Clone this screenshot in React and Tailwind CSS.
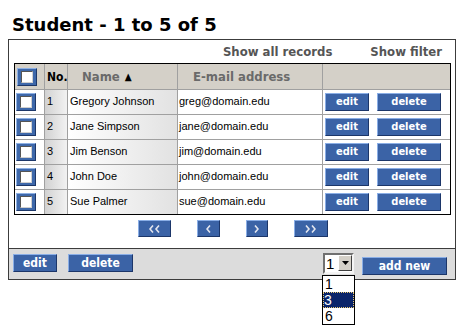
import React from "react";

const students = [
  { no: 1, name: "Gregory Johnson", email: "greg@domain.edu" },
  { no: 2, name: "Jane Simpson", email: "jane@domain.edu" },
  { no: 3, name: "Jim Benson", email: "jim@domain.edu" },
  { no: 4, name: "John Doe", email: "john@domain.edu" },
  { no: 5, name: "Sue Palmer", email: "sue@domain.edu" },
];

// blue bevelled button used everywhere
function Btn({ className = "", children }) {
  return (
    <button
      className={`flex items-center justify-center bg-[#3b63a6] border border-t-[#8aaee6] border-l-[#8aaee6] border-r-[#1c3669] border-b-[#1c3669] text-white font-bold text-[11px] leading-none font-['DejaVu_Sans_Condensed','DejaVu_Sans',sans-serif] ${className}`}
    >
      {children}
    </button>
  );
}

function Check() {
  return (
    <span className="flex items-center justify-center w-[20px] h-[18px] bg-[#3e68aa] border border-t-[#8db0e4] border-l-[#8db0e4] border-r-[#1d3768] border-b-[#1d3768]">
      <span className="w-[12px] h-[12px] bg-white border border-t-[#555] border-l-[#555] border-r-[#d0d0d0] border-b-[#d0d0d0]" />
    </span>
  );
}

function Chevrons({ dir = "left", count = 1 }) {
  const pts = dir === "left" ? "4,0.5 1,4 4,7.5" : "1,0.5 4,4 1,7.5";
  return (
    <svg width={count === 2 ? 11 : 5} height="8" viewBox={count === 2 ? "0 0 11 8" : "0 0 5 8"}>
      <polyline points={pts} fill="none" stroke="#e4e6ee" strokeWidth="1.6" />
      {count === 2 && (
        <polyline points={pts} transform="translate(6,0)" fill="none" stroke="#e4e6ee" strokeWidth="1.6" />
      )}
    </svg>
  );
}

export default function App() {
  return (
    <div className="w-[465px] h-[334px] bg-white pt-[14px] relative">
      {/* TITLE */}
      <h1 className="pl-[12px] text-[18px] leading-[22px] font-bold text-black font-['DejaVu_Sans',sans-serif]">
        Student - 1 to 5 of 5
      </h1>

      {/* PANEL */}
      <div className="ml-[8px] mt-[3px] w-[448px] border border-[#3c3c3c]">
        {/* toolbar */}
        <div className="h-[23px] flex items-center justify-end gap-[38px] pr-[13px] text-[13px] font-bold text-[#555] font-['DejaVu_Sans_Condensed','DejaVu_Sans',sans-serif]">
          <span>Show all records</span>
          <span>Show filter</span>
        </div>

        {/* table */}
        <div className="ml-[5px] w-[437px] border border-black font-['Liberation_Sans',Arial,sans-serif] text-[11px] text-black">
          <div className="flex h-[26px] bg-[#d4d0c8] border-b border-[#a0a0a0] font-bold text-[13px] font-['DejaVu_Sans_Condensed','DejaVu_Sans',sans-serif]">
            <div className="w-[30px] flex items-center pl-[2px] border-r border-[#a0a0a0]">
              <Check />
            </div>
            <div className="w-[23px] flex items-center pl-[2px] border-r border-[#a0a0a0] text-[12px] text-black">
              No.
            </div>
            <div className="w-[110px] flex items-center pl-[14px] border-r border-[#a0a0a0] text-[#6a6a6a]">
              Name <span className="ml-[5px] text-[10px] text-black">▲</span>
            </div>
            <div className="w-[145px] flex items-center pl-[15px] border-r border-[#a0a0a0] text-[#6a6a6a]">
              E-mail address
            </div>
            <div className="w-[127px]" />
          </div>

          {students.map((s) => (
            <div
              key={s.no}
              className="flex h-[25px] border-b border-[#a0a0a0] last:border-b-0 last:h-[24px]"
            >
              <div className="w-[30px] flex items-center pl-[1px] border-r border-[#a0a0a0] bg-white">
                <Check />
              </div>
              <div className="w-[23px] flex items-center pl-[2px] pb-[2px] border-r border-[#a0a0a0] bg-gradient-to-r from-[#d2d2d2] to-[#f2f2f2]">
                {s.no}
              </div>
              <div className="w-[110px] flex items-center pl-[2px] pb-[2px] border-r border-[#a0a0a0] bg-gradient-to-r from-white to-[#e2e2e2]">
                {s.name}
              </div>
              <div className="w-[145px] flex items-center pl-[1px] pb-[2px] border-r border-[#a0a0a0] bg-white">
                {s.email}
              </div>
              <div className="w-[127px] flex items-center gap-[8px] pl-[2px] pb-[1px] bg-white">
                <Btn className="w-[44px] h-[18px]">edit</Btn>
                <Btn className="w-[64px] h-[18px]">delete</Btn>
              </div>
            </div>
          ))}
        </div>

        {/* pager */}
        <div className="h-[34px] flex justify-center gap-[26px] pt-[5px] pl-[1px] border-b border-[#3c3c3c]">
          <Btn className="w-[33px] h-[17px]"><Chevrons dir="left" count={2} /></Btn>
          <Btn className="w-[23px] h-[17px]"><Chevrons dir="left" /></Btn>
          <Btn className="w-[22px] h-[17px]"><Chevrons dir="right" /></Btn>
          <Btn className="w-[34px] h-[17px]"><Chevrons dir="right" count={2} /></Btn>
        </div>

        {/* bottom bar */}
        <div className="h-[30px] bg-[#dcdcdc] flex items-start pl-[4px] pr-[8px]">
          <Btn className="w-[44px] h-[18px] mt-[5px] text-[12px]">edit</Btn>
          <Btn className="w-[65px] h-[18px] mt-[5px] ml-[11px] text-[12px]">delete</Btn>

          <div className="ml-auto mt-[4px] relative">
            <div className="w-[31px] h-[21px] flex bg-white border-2 border-t-[#707070] border-l-[#707070] border-r-[#f4f4f4] border-b-[#f4f4f4]">
              <span className="flex-1 pl-[1px] text-[15px] leading-[17px] font-['Liberation_Sans',Arial,sans-serif]">1</span>
              <span className="w-[14px] h-[16px] mt-[0px] flex items-center justify-center bg-[#d4d0c8] border border-t-white border-l-white border-r-[#404040] border-b-[#404040]">
                <svg width="7" height="4" viewBox="0 0 7 4">
                  <polygon points="0,0 7,0 3.5,4" fill="#000" />
                </svg>
              </span>
            </div>
            <ul className="absolute left-[-1px] top-[22px] w-[33px] bg-white border border-black text-[14px] leading-[16px] font-['Liberation_Sans',Arial,sans-serif] z-10">
              <li className="pl-[2px] h-[16px]">1</li>
              <li className="pl-[1px] h-[16px] bg-[#0a246a] text-white outline outline-1 outline-dotted outline-offset-[-1px] outline-[#e8c870]">3</li>
              <li className="pl-[2px] h-[16px]">6</li>
            </ul>
          </div>

          <Btn className="w-[85px] h-[18px] mt-[8px] ml-[8px] text-[12px]">add new</Btn>
        </div>
      </div>
    </div>
  );
}
